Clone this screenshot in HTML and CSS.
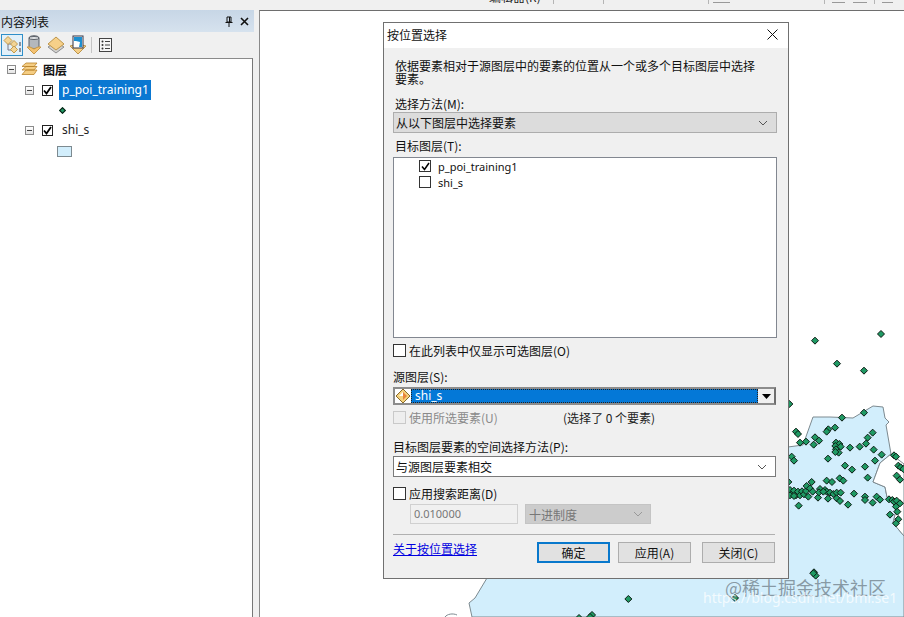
FILE: index.html
```html
<!DOCTYPE html>
<html lang="zh">
<head>
<meta charset="utf-8">
<title>按位置选择</title>
<link rel="stylesheet" href="styles.css">
</head>
<body>
<div class="app">
  <div class="topbar">
    <span class="cut-text">编辑器(R)</span>
    <span class="tb-sep s1"></span><span class="tb-sep s2"></span><span class="tb-sep s3"></span><span class="tb-sep s4"></span><span class="tb-sep s5"></span>
    <span class="tb-mark m1"></span><span class="tb-mark m2"></span><span class="tb-mark m3"></span><span class="tb-mark m4"></span>
  </div>
  <div class="main">
    <aside class="panel">
      <div class="panel-title">
        <span class="panel-name">内容列表</span>
        <svg class="pin" width="10" height="11" viewBox="0 0 10 11"><path d="M3 1h4v5H3zM5.500 1v5M1.500 6.500h7M5 7v4" fill="none" stroke="#111" stroke-width="1"/></svg>
        <svg class="closex" width="9" height="9" viewBox="0 0 9 9"><path d="M1 1l7 7M8 1l-7 7" stroke="#111" stroke-width="1.600"/></svg>
      </div>
      <div class="toolbar">
        <span class="tool active">
          <svg width="19" height="18" viewBox="0 0 19 18"><path d="M5 5v9h5M5 8h5" fill="none" stroke="#778" stroke-width="1"/><path d="M5 0.500l4 4-4 4-4-4z" fill="#f3d596" stroke="#c49a4c"/><path d="M11 4.500l3.500 3.500-3.500 3.500L7.500 8z" fill="#f3d596" stroke="#c49a4c"/><path d="M11 10l3.500 3.500-3.500 3.500-3.500-3.500z" fill="#f3d596" stroke="#c49a4c"/><path d="M16 7h2M16 9h2M16 13h2M16 15h2" stroke="#334" stroke-width="1"/></svg>
        </span>
        <span class="tool">
          <svg width="16" height="20" viewBox="0 0 16 20"><path d="M3 3c0-3 10-3 10 0v9c0 2-10 2-10 0z" fill="#b4b8bd" stroke="#5b6068"/><ellipse cx="8" cy="3" rx="5" ry="1.500" fill="#e4e6e8" stroke="#5b6068"/><path d="M1 12h3l4 2 4-2h3l-7 7z" fill="#f4c272" stroke="#c99a48"/></svg>
        </span>
        <span class="tool">
          <svg width="18" height="18" viewBox="0 0 18 18"><path d="M1 11l8 6 8-6-8-5z" fill="#d2d2d2" stroke="#8e8e8e"/><path d="M1 8l8-7 8 7-8 6z" fill="#f6d089" stroke="#bd954a"/></svg>
        </span>
        <span class="tool">
          <svg width="18" height="20" viewBox="0 0 18 20"><path d="M1 11l8 8 8-8-4-1H5z" fill="#f6d089" stroke="#bd954a"/><rect x="4" y="1" width="10" height="12" fill="#fff" stroke="#334"/><path d="M5 2h8v10h-3l1-5-4-1-2 0z" fill="#1d8fd0"/></svg>
        </span>
        <span class="tool-sep"></span>
        <span class="tool">
          <svg width="13" height="14" viewBox="0 0 13 14"><rect x=".5" y=".5" width="12" height="13" fill="#f7f7f7" stroke="#444"/><path d="M6 3.500h5M6 7h5M6 10.500h5" stroke="#444"/><circle cx="3.500" cy="3.500" r="1" fill="#333"/><circle cx="3.500" cy="7" r="1" fill="#333"/><circle cx="3.500" cy="10.500" r="1" fill="#333"/></svg>
        </span>
      </div>
      <div class="tree">
        <div class="row root">
          <span class="expander"></span>
          <svg class="layers" width="17" height="14" viewBox="0 0 17 14"><path d="M1 4.500L5 1h11l-3 3.500zM1 8L5 4.500h11L13 8zM1 12.500L5 8h11l-3 4.500z" fill="#f5cd82" stroke="#b9832c" stroke-width=".8"/></svg>
          <b class="root-name">图层</b>
        </div>
        <div class="row layer">
          <span class="expander"></span>
          <span class="tree-check"><svg width="9" height="9" viewBox="0 0 9 9"><path d="M1 4.500l2.500 3L8 1" fill="none" stroke="#000" stroke-width="1.800"/></svg></span>
          <span class="layer-name selected">p_poi_training1</span>
        </div>
        <div class="row legend"><span class="dot"></span></div>
        <div class="row layer">
          <span class="expander"></span>
          <span class="tree-check"><svg width="9" height="9" viewBox="0 0 9 9"><path d="M1 4.500l2.500 3L8 1" fill="none" stroke="#000" stroke-width="1.800"/></svg></span>
          <span class="layer-name">shi_s</span>
        </div>
        <div class="row legend swatch-row"><span class="swatch"></span></div>
      </div>
    </aside>
    <div class="map">
      <svg class="map-svg" viewBox="0 0 645 606" width="645" height="606">
        <defs>
          <path id="d" d="M0-10.500L10.500 0 0 10.500-10.500 0z" fill="#1f9a64" stroke="#0c1a12" stroke-width="3"/>
        </defs>
        <g transform="translate(-260 -11)">
          <path d="M788 447L803 445 813 417 830 417 853 418 863 412 873 406 883 407 885 418 889 422 886 425 891 454 880 463 873 482 885 487 887 497 897 507 893 523 904 536V617H472L469 603 475 598 487 578 500 500 788 447z" fill="#d2eefc" stroke="#7d8a90" stroke-width="1"/>
          <path d="M445 617c2-3 8-4 12-2" fill="none" stroke="#7d8a90"/>
          <path d="M891 454L904 464V536L893 523 897 507 887 497 885 487 873 482 880 463z" fill="#fff" stroke="#7d8a90"/>
          <g transform="translate(770 310) scale(.3333)">
            <use href="#d" x="333" y="72"/><use href="#d" x="135" y="92"/><use href="#d" x="201" y="161"/><use href="#d" x="282" y="182"/><use href="#d" x="58" y="282"/><use href="#d" x="282" y="308"/><use href="#d" x="216" y="323"/><use href="#d" x="195" y="353"/><use href="#d" x="175" y="358"/><use href="#d" x="170" y="365"/><use href="#d" x="78" y="365"/><use href="#d" x="84" y="372"/><use href="#d" x="308" y="368"/><use href="#d" x="293" y="383"/><use href="#d" x="135" y="382"/><use href="#d" x="147" y="392"/><use href="#d" x="108" y="395"/><use href="#d" x="90" y="398"/><use href="#d" x="131" y="404"/><use href="#d" x="288" y="401"/><use href="#d" x="269" y="410"/><use href="#d" x="240" y="413"/><use href="#d" x="198" y="398"/><use href="#d" x="208" y="402"/><use href="#d" x="196" y="408"/><use href="#d" x="212" y="410"/><use href="#d" x="198" y="418"/><use href="#d" x="206" y="428"/><use href="#d" x="196" y="426"/><use href="#d" x="311" y="419"/><use href="#d" x="335" y="434"/><use href="#d" x="315" y="452"/><use href="#d" x="372" y="436"/><use href="#d" x="378" y="440"/><use href="#d" x="65" y="440"/><use href="#d" x="72" y="452"/><use href="#d" x="174" y="446"/><use href="#d" x="225" y="467"/><use href="#d" x="246" y="479"/><use href="#d" x="285" y="470"/><use href="#d" x="385" y="467"/><use href="#d" x="392" y="472"/><use href="#d" x="400" y="477"/><use href="#d" x="380" y="497"/><use href="#d" x="390" y="509"/><use href="#d" x="293" y="503"/><use href="#d" x="209" y="505"/><use href="#d" x="220" y="512"/><use href="#d" x="170" y="512"/><use href="#d" x="186" y="516"/><use href="#d" x="125" y="516"/><use href="#d" x="55" y="516"/>
            <use href="#d" x="60" y="540"/><use href="#d" x="66" y="552"/><use href="#d" x="72" y="542"/><use href="#d" x="78" y="556"/><use href="#d" x="84" y="545"/><use href="#d" x="90" y="556"/><use href="#d" x="96" y="544"/><use href="#d" x="102" y="553"/><use href="#d" x="108" y="543"/><use href="#d" x="60" y="556"/><use href="#d" x="72" y="558"/><use href="#d" x="110" y="528"/><use href="#d" x="120" y="535"/><use href="#d" x="128" y="545"/><use href="#d" x="115" y="560"/><use href="#d" x="144" y="563"/><use href="#d" x="150" y="537"/><use href="#d" x="147" y="547"/><use href="#d" x="165" y="540"/><use href="#d" x="170" y="545"/><use href="#d" x="180" y="548"/><use href="#d" x="190" y="552"/><use href="#d" x="200" y="548"/><use href="#d" x="212" y="548"/><use href="#d" x="174" y="566"/><use href="#d" x="200" y="565"/><use href="#d" x="210" y="573"/><use href="#d" x="160" y="545"/>
            <use href="#d" x="86" y="587"/><use href="#d" x="234" y="584"/><use href="#d" x="252" y="551"/><use href="#d" x="285" y="560"/><use href="#d" x="285" y="570"/><use href="#d" x="308" y="578"/><use href="#d" x="320" y="560"/><use href="#d" x="330" y="569"/><use href="#d" x="357" y="568"/><use href="#d" x="367" y="570"/><use href="#d" x="372" y="575"/><use href="#d" x="380" y="572"/><use href="#d" x="390" y="580"/><use href="#d" x="378" y="590"/><use href="#d" x="382" y="605"/><use href="#d" x="360" y="614"/><use href="#d" x="385" y="628"/><use href="#d" x="378" y="640"/><use href="#d" x="132" y="787"/><use href="#d" x="137" y="797"/><use href="#d" x="130" y="790"/><use href="#d" x="-105" y="864"/><use href="#d" x="-425" y="867"/><use href="#d" x="-534" y="915"/><use href="#d" x="-540" y="921"/><use href="#d" x="-573" y="924"/>
          </g>
        </g>
      </svg>
    </div>
  </div>

  <section class="dialog">
    <header class="dlg-title">
      <span>按位置选择</span>
      <svg width="11" height="11" viewBox="0 0 11 11"><path d="M.5.500l10 10M10.500.500l-10 10" stroke="#111" stroke-width="1"/></svg>
    </header>
    <div class="dlg-body">
      <p class="desc">依据要素相对于源图层中的要素的位置从一个或多个目标图层中选择要素。</p>
      <div class="label l-method">选择方法(M):</div>
      <div class="select grey"><span>从以下图层中选择要素</span><svg class="chev" width="10" height="6" viewBox="0 0 10 6"><path d="M1 1l4 4 4-4" fill="none" stroke="#555"/></svg></div>
      <div class="label l-target">目标图层(T):</div>
      <div class="listbox">
        <div class="list-row"><span class="box"><svg width="9" height="9" viewBox="0 0 9 9"><path d="M1 4.500l2.500 3L8 1" fill="none" stroke="#000" stroke-width="1.500"/></svg></span><span>p_poi_training1</span></div>
        <div class="list-row"><span class="box"></span><span>shi_s</span></div>
      </div>
      <label class="check c-only"><span class="box"></span>在此列表中仅显示可选图层(O)</label>
      <div class="label l-source">源图层(S):</div>
      <div class="combo">
        <svg class="src-icon" width="16" height="16" viewBox="0 0 16 16"><path d="M8 1l7 7-7 7-7-7z" fill="#f4d27c" stroke="#8a6a2c"/><path d="M8 4l4 4-4 4z" fill="#e8843c"/><path d="M4 8l4-4v4z" fill="#fff"/></svg>
        <span class="combo-text">shi_s</span>
        <span class="combo-btn"><svg width="9" height="5" viewBox="0 0 9 5"><path d="M0 0h9L4.500 5z" fill="#000"/></svg></span>
      </div>
      <div class="use-row">
        <label class="check disabled"><span class="box"></span>使用所选要素(U)</label>
        <span class="count">(选择了 0 个要素)</span>
      </div>
      <div class="label l-spatial">目标图层要素的空间选择方法(P):</div>
      <div class="select white"><span>与源图层要素相交</span><svg class="chev" width="10" height="6" viewBox="0 0 10 6"><path d="M1 1l4 4 4-4" fill="none" stroke="#555"/></svg></div>
      <label class="check c-dist"><span class="box"></span>应用搜索距离(D)</label>
      <div class="dist-row">
        <span class="dist-input">0.010000</span>
        <span class="dist-unit"><span>十进制度</span><svg class="chev" width="10" height="6" viewBox="0 0 10 6"><path d="M1 1l4 4 4-4" fill="none" stroke="#999"/></svg></span>
      </div>
      <div class="sep"></div>
      <div class="footer">
        <a class="help" href="#">关于按位置选择</a>
        <span class="btn primary">确定</span>
        <span class="btn apply">应用(A)</span>
        <span class="btn close">关闭(C)</span>
      </div>
    </div>
  </section>

  <div class="wm-main">@稀土掘金技术社区</div>
  <div class="wm-url">https://blog.csdn.net/bmr.se1</div>
</div>
</body>
</html>
```

FILE: styles.css
```css
* { box-sizing: border-box; }
html, body { margin: 0; padding: 0; }
body {
  width: 904px;
  height: 617px;
  overflow: hidden;
  font-family: "Noto Sans CJK SC", "Noto Sans", sans-serif;
  font-size: 12px;
  color: #111;
  background: #f0f0f0;
}
.app { position: relative; width: 904px; height: 617px; overflow: hidden; display: flex; flex-direction: column; }

/* cropped application toolbar */
.topbar { height: 10px; background: #f0f0f0; position: relative; overflow: hidden; flex: none; }
.cut-text { position: absolute; left: 489px; top: -11px; font-size: 12px; line-height: 16px; color: #222; }
.tb-sep { position: absolute; top: 0; width: 1px; height: 4px; background: #b5b5b5; }
.s1 { left: 553px; } .s2 { left: 603px; } .s3 { left: 708px; } .s4 { left: 824px; } .s5 { left: 874px; }
.tb-mark { position: absolute; top: 2px; height: 1px; background: #999; }
.m1 { left: 713px; width: 17px; } .m2 { left: 832px; width: 13px; } .m3 { left: 853px; width: 14px; } .m4 { left: 882px; width: 11px; }

.main { flex: 1; display: flex; min-height: 0; }

/* table of contents panel */
.panel { width: 253px; flex: none; display: flex; flex-direction: column; }
.panel-title {
  height: 22px;
  display: flex;
  align-items: center;
  padding: 0 5px 0 1px;
  margin-right: -1px;
  background: linear-gradient(#c7d6e6, #d6e2ee);
}
.panel-name { flex: 1; font-size: 12px; }
.pin { margin-right: 6px; }
.toolbar { height: 26px; display: flex; align-items: center; padding-left: 1px; }
.tool { width: 22px; height: 21px; display: flex; align-items: center; justify-content: center; flex: none; }
.tool.active { height: 22px; border: 1px solid #2f8fc9; background: #e2f0f9; }
.tool-sep { width: 1px; height: 16px; background: #c4c4c4; margin: 0 2px; flex: none; }
.tree { flex: 1; background: #fff; border-top: 1px solid #8a8a8a; border-right: 1px solid #777; padding-top: 1px; }
.row { height: 20px; display: flex; align-items: center; }
.expander { width: 9px; height: 9px; border: 1px solid #8c8c8c; background: linear-gradient(#fff, #e4e4e4); position: relative; flex: none; }
.expander::after { content: ""; position: absolute; left: 1px; top: 3px; width: 5px; height: 1px; background: #444; }
.root { padding-left: 7px; padding-bottom: 2px; }
.layers { margin-left: 5px; }
.root-name { margin-left: 5px; font-size: 12px; font-weight: 700; }
.layer { padding-left: 25px; }
.tree-check { width: 11px; height: 11px; margin-left: 8px; border: 1px solid #222; background: #fff; display: flex; align-items: center; justify-content: center; flex: none; }
.layer-name { margin-left: 6px; padding: 0 3px; height: 20px; line-height: 19px; font-family: "Noto Sans", sans-serif; font-size: 12px; color: #222; }
.selected { background: #0a78d2; color: #fff; width: 92px; }
.legend { padding-left: 58px; }
.swatch-row { padding-top: 2px; }
.dot { width: 5px; height: 5px; margin-left: 2px; transform: rotate(45deg); background: #1f9a64; border: 1px solid #0c1a12; }
.swatch { width: 15px; height: 11px; margin-left: -1px; background: #d2eefc; border: 1px solid #7d8a90; }

/* map */
.map { flex: 1; margin-left: 6px; position: relative; background: #fff; border-top: 1px solid #6e6e6e; border-left: 1px solid #8a8a8a; }
.map-svg { position: absolute; left: 0; top: 0; display: block; }

/* dialog */
.dialog { position: absolute; left: 383px; top: 22px; width: 406px; height: 557px; background: #f0f0f0; border: 1px solid #707070; display: flex; flex-direction: column; }
.dlg-title { height: 25px; flex: none; background: #fff; display: flex; align-items: center; justify-content: space-between; padding: 0 10px 2px 3px; font-size: 12px; }
.dlg-body { padding: 11px 11px 0 9px; }
.desc { margin: 0; padding: 0 20px 0 2px; line-height: 13px; font-size: 12px; }
.label { height: 16px; line-height: 16px; font-size: 12px; }
.l-method { margin: 11px 0 0 2px; }
.l-target { margin: 5px 0 3px 2px; }
.l-source { margin-top: 12px; margin-bottom: 2px; }
.l-spatial { margin-top: 13px; margin-bottom: 1px; }
.select { height: 21px; display: flex; align-items: center; justify-content: space-between; padding: 0 8px 0 2px; border: 1px solid #adadad; }
.select.grey { background: #dcdcdc; }
.select.white { background: #fff; border-color: #7a7a7a; margin-right: 1px; }
.listbox { height: 181px; background: #fff; border: 1px solid #828790; padding: 0 0 0 25px; }
.list-row { height: 16px; display: flex; align-items: center; gap: 7px; font-family: "Noto Sans", sans-serif; font-size: 11px; }
.box { width: 12px; height: 12px; flex: none; background: #fff; border: 1px solid #333; display: inline-flex; align-items: center; justify-content: center; }
.check { display: flex; align-items: center; height: 14px; font-size: 12px; }
.check .box { width: 13px; height: 13px; margin-right: 3px; }
.c-only { margin-top: 5px; }
.c-dist { margin-top: 9px; }
.combo { height: 18px; display: flex; align-items: center; background: #fff; border: 2px solid #8c8c8c; border-right-color: #6e6e6e; margin-right: 1px; position: relative; }
.src-icon { flex: none; }
.combo-text { flex: 1; height: 14px; line-height: 13px; background: #0478d7; color: #fff; padding-left: 4px; font-family: "Noto Sans", sans-serif; font-size: 12px; outline: 1px dotted #222; outline-offset: -1px; overflow: hidden; }
.combo-btn { width: 16px; height: 14px; background: #f0f0f0; display: flex; align-items: center; justify-content: center; }
.use-row { display: flex; align-items: center; margin-top: 4px; }
.disabled { color: #8a8a8a; width: 170px; }
.disabled .box { border-color: #c9c9c9; background: #eee; }
.count { color: #222; }
.dist-row { display: flex; gap: 7px; margin-top: 4px; padding-left: 17px; }
.dist-input { width: 108px; height: 20px; line-height: 18px; padding-left: 3px; background: #f0f0f0; border: 1px solid #d0d0d0; color: #777; font-family: "Noto Sans", sans-serif; font-size: 11px; }
.dist-unit { width: 126px; height: 20px; background: #ccc; border: 1px solid #c4c4c4; color: #777; display: flex; align-items: center; justify-content: space-between; padding: 0 7px 0 3px; }
.sep { height: 1px; background: #b0b0b0; margin: 10px 2px 0 0; }
.footer { display: flex; margin-top: 7px; margin-right: 2px; }
.help { flex: 1; color: #0000e0; text-decoration: underline; height: 14px; line-height: 11px; margin-top: 1px; }
.btn { width: 73px; height: 21px; background: #e1e1e1; border: 1px solid #adadad; display: flex; align-items: center; justify-content: center; font-size: 12px; color: #111; }
.primary { border: 2px solid #0878cc; margin-right: 8px; }
.apply { margin-right: 11px; }

/* watermark */
.wm-main { position: absolute; left: 725px; top: 575px; font-size: 18px; line-height: 24px; color: rgba(110, 125, 135, .75); white-space: nowrap; }
.wm-url { position: absolute; left: 703px; top: 589px; font-family: "Noto Sans", sans-serif; font-size: 14px; line-height: 18px; color: rgba(255, 255, 255, .75); white-space: nowrap; }
```
